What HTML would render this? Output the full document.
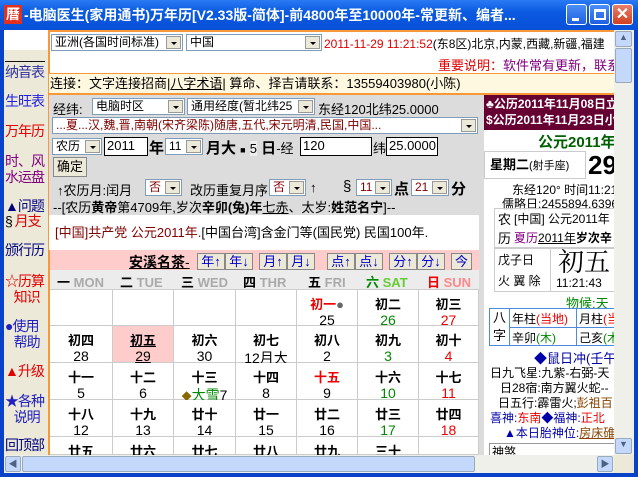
<!DOCTYPE html>
<html><head><meta charset="utf-8">
<style>
*{margin:0;padding:0;box-sizing:border-box}
body{width:638px;height:477px;overflow:hidden;background:#0842c8;font-family:"Liberation Sans","WenQuanYi Zen Hei","Noto Sans CJK SC",sans-serif;font-size:12px;position:relative}
.a{position:absolute;white-space:nowrap}
.tb{left:0;top:0;width:638px;height:30px;background:linear-gradient(#2a7af5,#0a5ae0 40%,#0850d8);color:#fff;font-weight:bold;font-size:14px;line-height:30px}
.btn{width:21px;height:21px;top:4px;border:1px solid #fff;border-radius:3px;background:linear-gradient(#4c8ef8,#2060e0)}
.sel{background:#fff;border:1px solid #7f9db9;height:17px;line-height:15px;padding-left:3px;font-size:12px}
.dd{position:absolute;right:1px;top:1px;width:15px;height:13px;background:#ece9d8;border:1px solid #999;z-index:2}
.dd:after{content:"";position:absolute;left:4px;top:5px;border:3px solid transparent;border-top:3px solid #000}
.side div{position:absolute;left:1px;font-size:14px;line-height:16px;letter-spacing:-1px}
.cell{position:absolute;border-right:1px solid #ccc;border-bottom:1px solid #ccc;text-align:center;background:#fff}
.cell b{display:block;font-size:13px;margin-top:4px;height:18px}
.cell span{display:block;font-size:14px}
.nb{position:absolute;top:253px;height:17px;background:#ece9d8;border:1px solid #888;color:#00c;font-size:13px;line-height:15px;text-align:center}
.rp div{position:absolute;font-size:12px}
</style></head><body>
<div class="a tb"><span style="position:absolute;left:4px;top:5px;width:18px;height:19px;background:#e03020;color:#fff;font-size:14px;line-height:19px;text-align:center">曆</span><span style="position:absolute;left:24px">-电脑医生(家用通书)万年历[V2.33版-简体]-前4800年至10000年-常更新、编者...</span></div>
<div class="a btn" style="left:566px"><div style="position:absolute;left:5px;top:13px;width:7px;height:3px;background:#fff"></div></div>
<div class="a btn" style="left:589px"><div style="position:absolute;left:4px;top:4px;width:12px;height:11px;border:2px solid #fff;border-top-width:3px"></div></div>
<div class="a btn" style="left:612px;background:linear-gradient(#e8806a,#d04020);color:#fff;font-weight:bold;font-size:16px;line-height:19px;text-align:center">✕</div>

<div class="a" style="left:4px;top:30px;width:630px;height:443px;background:#fff"></div>
<!-- left side -->
<div class="a side" style="left:4px;top:30px;width:46px;height:425px;background:#ece9d8;border-right:2px solid #f89838;overflow:hidden">
<div style="top:0;width:44px;height:20px;background:#fff;left:0"></div>
<div style="top:22px;color:#000">———</div>
<div style="top:34px;color:#3030a0">纳音表</div>
<div style="top:63px;color:#2020e0">生旺表</div>
<div style="top:93px;color:#e00000">万年历</div>
<div style="top:123px;color:#800080">时、风<br>水运盘</div>
<div style="top:168px;color:#00007f">▲问题</div>
<div style="top:183px;color:#e00000"><span style="color:#000">§</span> 月支</div>
<div style="top:212px;color:#00007f">颁行历</div>
<div style="top:243px;color:#e00000">☆历算<br>&nbsp;&nbsp;&nbsp;知识</div>
<div style="top:288px;color:#2020c0">●使用<br>&nbsp;&nbsp;&nbsp;帮助</div>
<div style="top:333px;color:#e00000">▲升级</div>
<div style="top:363px;color:#2020c0">★各种<br>&nbsp;&nbsp;&nbsp;说明</div>
<div style="top:407px;color:#00007f">回顶部</div>
</div>
<!-- top rows -->
<div class="a" style="left:49px;top:30px;width:565px;height:66px;border-top:2px solid #f89838"></div>
<div class="a sel" style="left:51px;top:34px;width:132px">亚洲(各国时间标准)<i class="dd"></i></div>
<div class="a sel" style="left:186px;top:34px;width:136px">中国<i class="dd"></i></div>
<div class="a" style="left:324px;top:35px;color:#e00000;font-size:12px">2011-11-29 11:21:52<span style="color:#000">(东8区)北京,内蒙,西藏,新疆,福建</span></div>
<div class="a" style="left:438px;top:55px;font-size:13px;color:#e00000">重要说明：<span style="color:#800080">软件常有更新，联系</span></div>
<div class="a" style="left:49px;top:73px;width:565px;height:22px;background:#fff8e0;border-top:1px solid #f89838;border-bottom:2px solid #f89838;line-height:20px;padding-left:1px;font-size:13px">连接：文字连接招商|<u>八字术语</u>| 算命、择吉请联系：13559403980(小陈)</div>
<!-- grey panel -->
<div class="a" style="left:49px;top:95px;width:432px;height:120px;background:#dcdcdc"></div>
<div class="a" style="left:53px;top:99px;font-size:13px">经纬:</div>
<div class="a sel" style="left:92px;top:98px;width:93px">电脑时区<i class="dd"></i></div>
<div class="a sel" style="left:187px;top:98px;width:128px">通用经度(暂北纬25<i class="dd"></i></div>
<div class="a" style="left:318px;top:99px;font-size:13px">东经120北纬25.0000</div>
<div class="a sel" style="left:52px;top:117px;width:426px;color:#800000">...夏...汉,魏,晋,南朝(宋齐梁陈)随唐,五代,宋元明清,民国,中国...<i class="dd"></i></div>
<div class="a sel" style="left:52px;top:138px;width:50px">农历<i class="dd"></i></div>
<div class="a" style="left:104px;top:137px;width:44px;height:19px;border:1px solid #000;background:#fff;padding-left:2px;font-size:13px">2011</div>
<div class="a" style="left:149px;top:137px;font-size:15px;font-weight:bold">年</div>
<div class="a sel" style="left:165px;top:138px;width:38px">11<i class="dd"></i></div>
<div class="a" style="left:206px;top:137px;font-size:15px;font-weight:bold">月大 <span style="font-size:9px">■</span> <span style="font-weight:normal;font-size:13px;background:#eee">5</span> 日<span style="font-weight:normal;font-size:13px">-经</span></div>
<div class="a" style="left:300px;top:137px;width:72px;height:19px;border:1px solid #000;background:#fff;padding-left:2px;font-size:13px">120</div>
<div class="a" style="left:373px;top:138px;font-size:13px">纬</div>
<div class="a" style="left:386px;top:137px;width:52px;height:19px;border:1px solid #000;background:#fff;padding-left:2px;font-size:13px">25.0000</div>
<div class="a" style="left:53px;top:157px;width:34px;height:20px;border:1px solid #888;background:#ece9d8;font-size:13px;line-height:18px;text-align:center">确定</div>
<div class="a" style="left:57px;top:180px;font-size:13px">↑农历月:闰月</div>
<div class="a sel" style="left:145px;top:179px;width:37px;color:#800000">否<i class="dd"></i></div>
<div class="a" style="left:190px;top:180px;font-size:13px">改历重复月序</div>
<div class="a sel" style="left:269px;top:179px;width:37px;color:#800000">否<i class="dd"></i></div>
<div class="a" style="left:310px;top:180px;font-size:13px">↑</div>
<div class="a" style="left:343px;top:178px;font-size:15px">§</div>
<div class="a sel" style="left:356px;top:179px;width:36px;color:#800000">11<i class="dd"></i></div>
<div class="a" style="left:394px;top:178px;font-size:15px;font-weight:bold">点</div>
<div class="a sel" style="left:411px;top:179px;width:38px;color:#800000">21<i class="dd"></i></div>
<div class="a" style="left:451px;top:178px;font-size:15px;font-weight:bold">分</div>
<div class="a" style="left:53px;top:197px;font-size:13px">--[农历<b>黄帝</b>第4709年,岁次<b>辛卯(兔)年</b><u>七赤</u>、太岁:<b>姓范名宁</b>]--</div>
<div class="a" style="left:49px;top:215px;width:432px;height:35px;background:#fff"></div>
<div class="a" style="left:55px;top:222px;font-size:13px;color:#800000">[中国]共产党 公元2011年.<span style="color:#000">[中国台湾]含金门等(国民党) 民国100年.</span></div>
<!-- calendar -->
<div class="a" style="left:50px;top:250px;width:429px;height:20px;background:#ffcccc"></div>
<div class="a" style="left:129px;top:252px;font-size:14px;font-weight:bold;text-decoration:underline">安溪名茶<span style="text-decoration:none;font-weight:normal">-</span></div>
<div class="nb" style="left:197px;width:28px">年↑</div><div class="nb" style="left:225px;width:28px">年↓</div>
<div class="nb" style="left:259px;width:28px">月↑</div><div class="nb" style="left:287px;width:28px">月↓</div>
<div class="nb" style="left:327px;width:28px">点↑</div><div class="nb" style="left:355px;width:28px">点↓</div>
<div class="nb" style="left:389px;width:28px">分↑</div><div class="nb" style="left:417px;width:28px">分↓</div>
<div class="nb" style="left:451px;width:21px">今</div>
<div class="a" style="left:50px;top:270px;width:429px;height:20px;background:#ececec;border-bottom:1px solid #ccc"></div>
<div class="a" style="left:57px;top:272px;font-size:13px;font-weight:bold">一 <span style="color:#aaa">MON</span></div>
<div class="a" style="left:120px;top:272px;font-size:13px;font-weight:bold">二 <span style="color:#aaa">TUE</span></div>
<div class="a" style="left:181px;top:272px;font-size:13px;font-weight:bold">三 <span style="color:#aaa">WED</span></div>
<div class="a" style="left:243px;top:272px;font-size:13px;font-weight:bold">四 <span style="color:#aaa">THR</span></div>
<div class="a" style="left:308px;top:272px;font-size:13px;font-weight:bold">五 <span style="color:#aaa">FRI</span></div>
<div class="a" style="left:366px;top:272px;font-size:13px;font-weight:bold;color:#080">六 <span style="color:#6c3">SAT</span></div>
<div class="a" style="left:427px;top:272px;font-size:13px;font-weight:bold;color:#e00">日 <span style="color:#f88">SUN</span></div>
<div id="cal"></div>
<script>
var cols=[50,113,174,236,297,358,419,479],rows=[290,326,363,400,437,474];
var d=[
[["",""],["",""],["",""],["",""],["初一●","25","#e00","#000"],["初二","26","#000","#080"],["初三","27","#000","#e00"]],
[["初四","28"],["初五","29"],["初六","30"],["初七","12月大"],["初八","2"],["初九","3","#000","#080"],["初十","4","#000","#e00"]],
[["十一","5"],["十二","6"],["十三","◆大雪7"],["十四","8"],["十五","9","#e00"],["十六","10","#000","#080"],["十七","11","#000","#e00"]],
[["十八","12"],["十九","13"],["廿十","14"],["廿一","15"],["廿二","16"],["廿三","17","#000","#080"],["廿四","18","#000","#e00"]],
[["廿五",""],["廿六",""],["廿七",""],["廿八",""],["廿九",""],["三十",""],["",""]]];
var h="";
for(var r=0;r<5;r++)for(var c=0;c<7;c++){var x=d[r][c],bg=(r==1&&c==1)?"#ffcccc":"#fff",hh=Math.min(rows[r+1],455)-rows[r];
var s=x[1];if(s.indexOf("◆")==0)s='<i style="color:#860;font-style:normal;font-size:10px">◆</i><span style="display:inline;color:#080">大雪</span>7';
var lb=x[0].replace("●",'<i style="color:#666;font-style:normal">●</i>');
h+='<div class="cell" style="left:'+cols[c]+'px;top:'+rows[r]+'px;width:'+(cols[c+1]-cols[c])+'px;height:'+hh+'px;background:'+bg+'"><b style="color:'+(x[2]||"#000")+(r==1&&c==1?';text-decoration:underline':'')+'">'+lb+'</b><span style="color:'+(x[3]||"#000")+(r==1&&c==1?';text-decoration:underline':'')+'">'+s+'</span></div>';}
document.getElementById("cal").innerHTML=h;
</script>
<div class="a" style="left:479px;top:95px;width:5px;height:360px;background:#dcdcdc"></div>
<!-- right panel -->
<div class="a rp" style="left:484px;top:95px;width:130px;height:360px;background:#fff;overflow:hidden">
<div style="left:0;top:0;width:130px;height:35px;background:#660033;color:#fff;font-weight:bold;line-height:16px;padding:1px 0 0 2px">♣公历2011年11月08日立<br>$公历2011年11月23日小</div>
<div style="left:54px;top:36px;color:#006000;font-weight:bold;font-size:15px">公元2011年</div>
<div style="left:0;top:56px;width:102px;height:28px;border:1px solid #ccc;line-height:26px;padding-left:5px"><b style="font-size:13px">星期二</b><span style="font-size:11px">(射手座)</span></div>
<div style="left:104px;top:55px;font-size:26px;font-weight:bold">29</div>
<div style="left:28px;top:86px">东经120° 时间11:21</div>
<div style="left:18px;top:100px">儒略日:2455894.6396</div>
<div style="left:10px;top:113px;width:130px;height:40px;border:1px solid #ccc"></div>
<div style="left:14px;top:115px;font-size:13px;line-height:19px">农<br>历</div>
<div style="left:30px;top:115px;line-height:19px">[中国] 公元2011年<br><span style="color:#800080">夏历</span><u>2011年</u><b>岁次辛</b></div>
<div style="left:10px;top:153px;width:56px;height:44px;border:1px solid #ccc;border-right:0"></div>
<div style="left:66px;top:153px;width:70px;height:44px;border:1px solid #ccc"></div>
<div style="left:14px;top:155px;line-height:21px">戊子日<br>火 翼 除</div>
<div style="left:74px;top:147px;font-size:26px;font-family:'Noto Serif CJK SC',serif">初五</div>
<div style="left:72px;top:181px">11:21:43</div>
<div style="left:82px;top:198px;color:#080;font-size:13px">物候:天</div>
<div style="left:5px;top:213px;width:130px;height:38px;border:1px solid #4a8ae0"></div>
<div style="left:25px;top:213px;width:1px;height:38px;background:#4a8ae0"></div>
<div style="left:92px;top:213px;width:1px;height:38px;background:#4a8ae0"></div>
<div style="left:25px;top:232px;width:110px;height:1px;background:#4a8ae0"></div>
<div style="left:9px;top:214px;font-size:13px;line-height:18px">八<br>字</div>
<div style="left:28px;top:215px">年柱<span style="color:#e00">(当地)</span></div>
<div style="left:95px;top:215px">月柱<span style="color:#e00">(当</span></div>
<div style="left:28px;top:234px">辛卯<span style="color:#080">(木)</span></div>
<div style="left:95px;top:234px">己亥<span style="color:#080">(木</span></div>
<div style="left:50px;top:253px;font-size:13px;color:#00a">◆鼠日冲(壬午)</div>
<div style="left:6px;top:269px">日九飞星:九紫-右弼-天</div>
<div style="left:16px;top:284px">日28宿:南方翼火蛇--</div>
<div style="left:14px;top:299px">日五行:霹雷火;<span style="color:#840">彭祖百</span></div>
<div style="left:6px;top:314px;color:#00a">喜神:<span style="color:#e00">东南</span>◆福神:<span style="color:#e00">正北</span></div>
<div style="left:20px;top:329px;color:#00a">▲本日胎神位:<u style="color:#840">房床碓</u></div>
<div style="left:5px;top:348px;width:130px;height:20px;border:1px solid #999"></div>
<div style="left:8px;top:348px">神煞</div>
</div>
<!-- scrollbars -->
<div class="a" style="left:614px;top:30px;width:20px;height:425px;background:#f0f0ea"></div>
<div class="a" style="left:615px;top:31px;width:17px;height:16px;background:#c4d8fc;border:1px solid #9ab;border-radius:2px;font-size:9px;text-align:center;color:#4d6185">▲</div>
<div class="a" style="left:615px;top:48px;width:17px;height:35px;background:#c4d8fc;border:1px solid #9ab;border-radius:2px"></div>
<div class="a" style="left:615px;top:438px;width:17px;height:16px;background:#c4d8fc;border:1px solid #9ab;border-radius:2px;font-size:9px;text-align:center;color:#4d6185">▼</div>
<div class="a" style="left:4px;top:455px;width:610px;height:18px;background:#f0f0ea"></div>
<div class="a" style="left:5px;top:456px;width:16px;height:16px;background:#c4d8fc;border:1px solid #9ab;border-radius:2px;font-size:9px;text-align:center;color:#4d6185">◀</div>
<div class="a" style="left:22px;top:456px;width:453px;height:16px;background:#c4d8fc;border:1px solid #9ab;border-radius:2px"></div>
<div class="a" style="left:597px;top:456px;width:16px;height:16px;background:#c4d8fc;border:1px solid #9ab;border-radius:2px;font-size:9px;text-align:center;color:#4d6185">▶</div>
<div class="a" style="left:614px;top:455px;width:20px;height:18px;background:#ece9d8"></div>
</body></html>
